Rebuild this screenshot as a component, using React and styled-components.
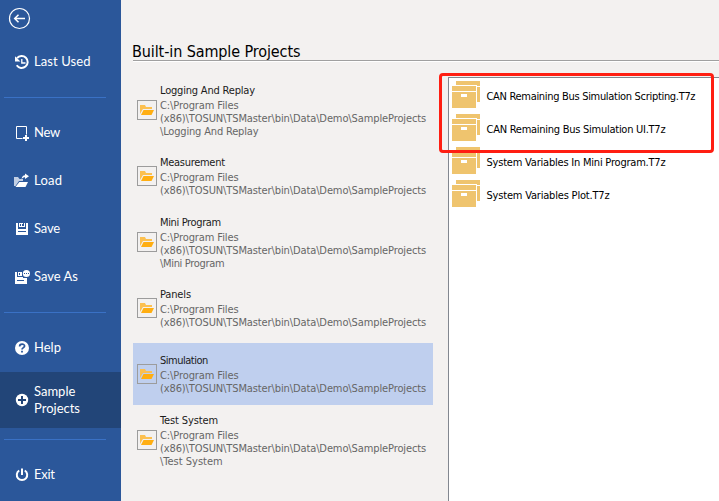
import React from 'react';
import styled, { createGlobalStyle } from 'styled-components';

const GlobalStyle = createGlobalStyle`
  * { box-sizing: border-box; }
  body { margin: 0; overflow: hidden; }
`;

const Window = styled.div`
  position: relative;
  display: flex;
  width: 719px;
  height: 501px;
  overflow: hidden;
  background: #f3f1f0;
  font-family: 'DejaVu Sans Condensed', 'DejaVu Sans', sans-serif;
  font-stretch: condensed;
  font-size: 11px;
  color: #1b1b1b;
`;

const Sidebar = styled.nav`
  flex: 0 0 121px;
  background: #2b579a;
  color: #fff;
  font-family: Lato, sans-serif;
  font-size: 13px;
  line-height: 17px;
`;

const BackButton = styled.div`
  height: 38px;
  padding: 7px 0 0 8px;
  svg { display: block; }
`;

const MenuItem = styled.div`
  display: flex;
  align-items: center;
  gap: 4px;
  height: ${(p) => (p.$tall ? 56 : 48)}px;
  padding: 0 20px 0 14px;
  background: ${(p) => (p.$active ? '#224578' : 'transparent')};
  svg { flex: none; }
`;

const MenuLabel = styled.span`
  padding-bottom: ${(p) => (p.$tall ? 0 : 1)}px;
  letter-spacing: ${(p) => p.$spacing || 0}px;
`;

const Divider = styled.div`
  height: 1px;
  margin: 11px 15px 11px 4px;
  background: #3a71c5;
`;

const Main = styled.main`
  flex: 1;
  min-width: 0;
  display: flex;
  flex-direction: column;
`;

const Heading = styled.h1`
  height: 62px;
  margin: 0 0 0 12px;
  padding: 42px 0 0 0;
  border-bottom: 1px solid #fff;
  box-shadow: inset 0 -1px 0 #a0a0a0;
  font-size: 16px;
  font-weight: 400;
  line-height: 19px;
  letter-spacing: -0.1px;
  text-indent: -1px;
  color: #000;
`;

const Columns = styled.div`
  flex: 1;
  display: flex;
  min-height: 0;
  padding: 15px 0 0 12px;
`;

const FolderList = styled.div`
  flex: 0 0 315px;
  display: flex;
  flex-direction: column;
  gap: 4px;
  padding-top: 2px;
`;

const FolderRow = styled.div`
  display: flex;
  align-items: center;
  gap: 3px;
  flex: none;
  width: 300px;
  height: 62px;
  padding-left: 4px;
  background: ${(p) => (p.$active ? '#bfcfee' : 'transparent')};
`;

const FolderFrame = styled.div`
  display: grid;
  place-items: center;
  flex: none;
  width: 20px;
  height: 20px;
  border: 1px solid #9c9c9c;
`;

const FolderText = styled.div`
  padding-top: 1px;
  line-height: 13px;
  white-space: nowrap;
`;

const Line = styled.div`
  letter-spacing: ${(p) => p.$spacing || 0}px;
  color: ${(p) => (p.$title ? '#1b1b1b' : '#666')};
  margin-bottom: ${(p) => (p.$title ? 2 : 0)}px;
`;

const FileList = styled.div`
  flex: 1;
  min-width: 0;
  padding: 0 0 0 3px;
  background: #fff;
  border-top: 1px solid #828790;
  border-left: 1px solid #828790;
  color: #000;
`;

const FileRow = styled.div`
  display: flex;
  align-items: center;
  gap: 6px;
  height: 33px;
  white-space: nowrap;
  letter-spacing: ${(p) => p.$spacing}px;
`;

const FileName = styled.span`
  padding-top: 4px;
  padding-left: 0.5px;
`;

const Highlight = styled.div`
  position: absolute;
  left: 439px;
  top: 73px;
  width: 275px;
  height: 80px;
  border: 3px solid #ff1e12;
  border-radius: 4px;
`;

const svgProps = { width: 16, height: 16, viewBox: '0 0 16 16', fill: 'none', stroke: '#fff' };

const BackIcon = () => (
  <svg width="23" height="23" viewBox="0 0 23 23" fill="none" stroke="#fff">
    <circle cx="11.5" cy="11.5" r="10" strokeWidth="1.2" />
    <path d="M17 11.5H6.8M10.5 7.8l-3.8 3.7 3.8 3.7" strokeWidth="1.5" />
  </svg>
);
const HistoryIcon = () => (
  <svg {...svgProps}>
    <path d="M3 4.2A6 6 0 1 1 2.7 11.3" strokeWidth="2" />
    <path d="M1 2.2V7.6H6.4Z" fill="#fff" stroke="none" />
    <path d="M7.8 5v4h3.7" strokeWidth="1.3" />
  </svg>
);
const NewIcon = () => (
  <svg {...svgProps}>
    <path d="M8.500 13.500h-6v-12h10v8" />
    <path d="M12 10v6M9 13h6" strokeWidth="2" />
  </svg>
);
const LoadIcon = () => (
  <svg {...svgProps} stroke="none">
    <path d="M0 4h4l1.500 2H9v2H5L1.500 13H0Z" fill="#c2cfe4" />
    <path d="M5.300 9H14l-2.500 5H1.500Z" fill="#fff" />
    <path d="M7.500 6C8 3.500 9 2.200 11 2.200V0.500l4 2.700-4 2.700V4.200C9.600 4.200 8.800 4.800 7.500 6Z" fill="#fff" />
  </svg>
);
const SaveIcon = () => (
  <svg {...svgProps} stroke="none">
    <path d="M2 2h2v5h8V2h2v12H2Z" fill="#fff" />
    <path d="M5 2h6v4H5Z" fill="#fff" />
    <path d="M6 3h1v2H6ZM9 2h1v3H8V3h1Z" fill="#2b579a" />
    <path d="M4 6h8v2H4ZM4 10h8v1H4Z" fill="#2b579a" />
    <path d="M2 8h12v2H2ZM5 2h1v4H5ZM5 5h6v1H5Z" fill="#fff" />
  </svg>
);
const SaveAsIcon = () => (
  <svg {...svgProps} stroke="none">
    <path d="M1 3h2v5h6v1h4v6H1Z" fill="#fff" />
    <path d="M4 3h4v4H4Z" fill="#fff" />
    <path d="M5 4h1v2H5ZM3 11h7v1H3Z" fill="#2b579a" />
    <circle cx="12.2" cy="4.7" r="4.2" fill="#2b579a" />
    <circle cx="12.4" cy="4.5" r="3.6" fill="#fff" />
    <path d="M10 4h1v1h-1ZM12 4h1v1h-1ZM14 4h1v1h-1Z" fill="#2b579a" />
  </svg>
);
const HelpIcon = () => (
  <svg {...svgProps}>
    <circle cx="8" cy="8" r="7" fill="#fff" stroke="none" />
    <path d="M5.6 6.4c0-3 5-3 5-.3C10.6 7.7 8 7.6 8 9.6" stroke="#2b579a" strokeWidth="1.7" />
    <path d="M7.1 10.8h1.8v1.7h-1.8Z" fill="#2b579a" stroke="none" />
  </svg>
);
const PlusIcon = () => (
  <svg {...svgProps}>
    <circle cx="8" cy="8" r="6.2" fill="#fff" stroke="none" />
    <path d="M8 4v8M4 8h8" stroke="#224578" strokeWidth="2" />
  </svg>
);
const PowerIcon = () => (
  <svg {...svgProps} strokeWidth="2">
    <path d="M5.2 3.5a5.2 5.2 0 1 0 5.6 0M8 1.5V8" />
  </svg>
);
const FolderIcon = () => (
  <svg width="16" height="12" viewBox="0 0 16 12">
    <path d="M1 1h5l1 2h6v2H4L1 10Z" fill="#fcc050" />
    <path d="M4.5 6H15l-2.5 5H2Z" fill="#ffae12" />
  </svg>
);
const ArchiveIcon = () => (
  <svg width="28" height="27" viewBox="0 0 28 27" fill="#efc46e">
    <path d="M4 0h24v5H4ZM25 6h3v15h-3ZM0 5h24v5H0ZM0 11h24v16H0Z" />
    <path d="M0 4h25v1H0ZM24 4h1v17h-1ZM0 10h24v1H0Z" fill="#fff" />
    <path d="M9 13h6v3H9Z" fill="#fff" />
  </svg>
);

const topMenu = [
  { label: 'New', Icon: NewIcon, spacing: -0.3 },
  { label: 'Load', Icon: LoadIcon, spacing: 0.2 },
  { label: 'Save', Icon: SaveIcon, spacing: -0.2 },
  { label: 'Save As', Icon: SaveAsIcon },
];

const root = [
  ['C:\\Program Files', -0.1],
  ['(x86)\\TOSUN\\TSMaster\\bin\\Data\\Demo\\SampleProjects', -0.11],
];

const folders = [
  { name: 'Logging And Replay', spacing: -0.19, lines: [...root, ['\\Logging And Replay', -0.17]] },
  { name: 'Measurement', spacing: -0.29, lines: root },
  { name: 'Mini Program', spacing: -0.36, lines: [...root, ['\\Mini Program', -0.33]] },
  { name: 'Panels', spacing: -0.15, lines: root },
  { name: 'Simulation', spacing: -0.5, lines: root, active: true },
  { name: 'Test System', spacing: -0.13, lines: [...root, ['\\Test System', 0]] },
];

const files = [
  ['CAN Remaining Bus Simulation Scripting.T7z', -0.31],
  ['CAN Remaining Bus Simulation UI.T7z', -0.26],
  ['System Variables In Mini Program.T7z', -0.21],
  ['System Variables Plot.T7z', -0.19],
];

const Item = ({ label, Icon, spacing, active }) => (
  <MenuItem $active={active} $tall={active}>
    <Icon />
    <MenuLabel $spacing={spacing} $tall={active}>{label}</MenuLabel>
  </MenuItem>
);

export default function App() {
  return (
    <Window>
      <GlobalStyle />
      <Sidebar>
        <BackButton><BackIcon /></BackButton>
        <Item label="Last Used" Icon={HistoryIcon} spacing={0.1} />
        <Divider />
        {topMenu.map((m) => <Item key={m.label} {...m} />)}
        <Divider />
        <Item label="Help" Icon={HelpIcon} />
        <Item label="Sample Projects" Icon={PlusIcon} active />
        <Divider />
        <Item label="Exit" Icon={PowerIcon} spacing={-0.3} />
      </Sidebar>
      <Main>
        <Heading>Built-in Sample Projects</Heading>
        <Columns>
          <FolderList>
            {folders.map((f) => (
              <FolderRow key={f.name} $active={f.active}>
                <FolderFrame><FolderIcon /></FolderFrame>
                <FolderText>
                  <Line $title $spacing={f.spacing}>{f.name}</Line>
                  {f.lines.map(([text, spacing]) => (
                    <Line key={text} $spacing={spacing}>{text}</Line>
                  ))}
                </FolderText>
              </FolderRow>
            ))}
          </FolderList>
          <FileList>
            {files.map(([name, spacing]) => (
              <FileRow key={name} $spacing={spacing}>
                <ArchiveIcon />
                <FileName>{name}</FileName>
              </FileRow>
            ))}
          </FileList>
        </Columns>
      </Main>
      <Highlight />
    </Window>
  );
}
